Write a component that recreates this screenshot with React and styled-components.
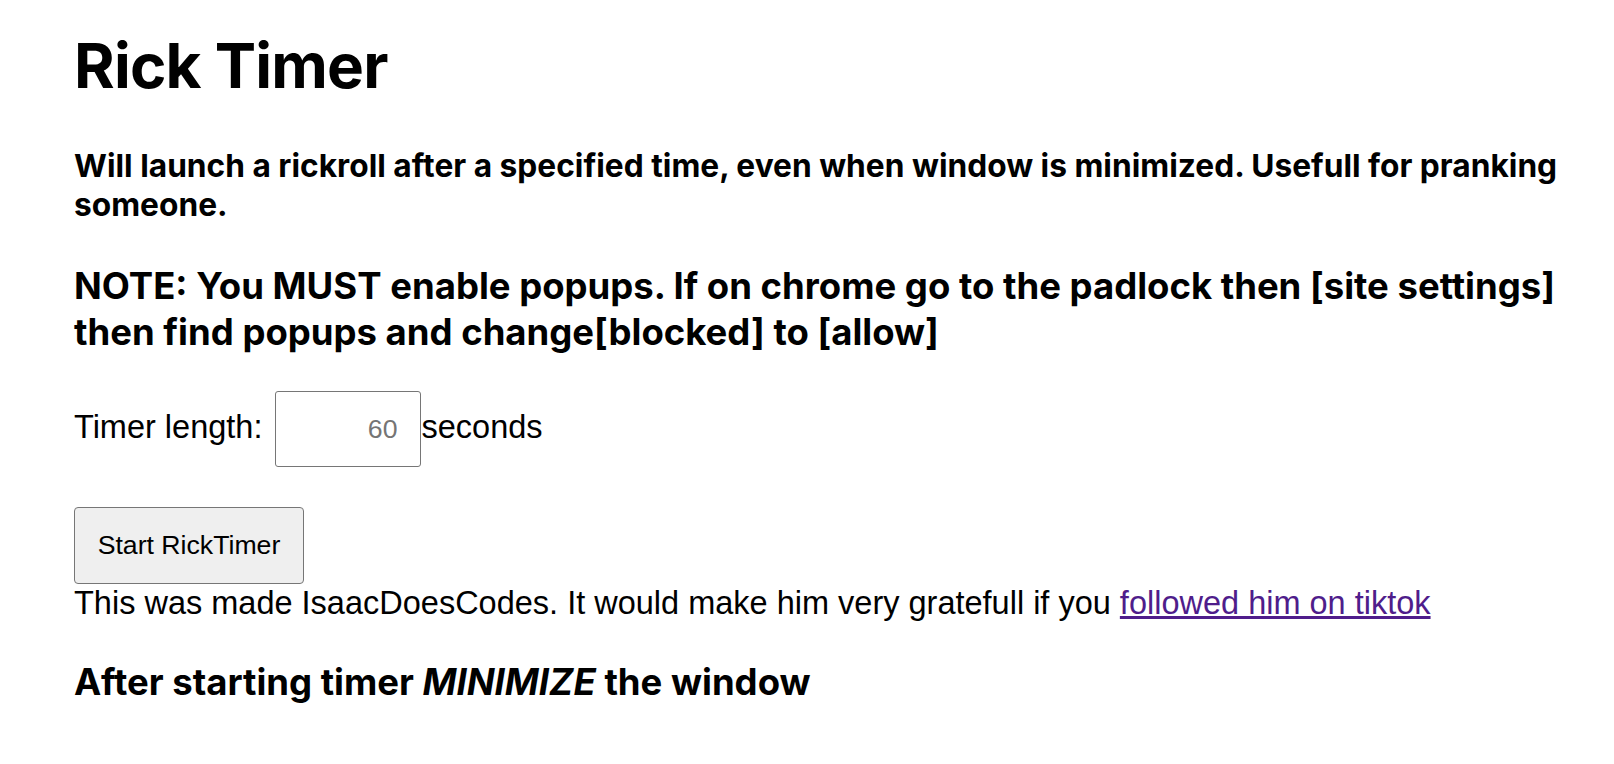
import React from "react"
import styled, { createGlobalStyle } from "styled-components"

const GlobalStyle = createGlobalStyle`
  body {
    margin: 0;
    background: #ffffff;
    color: #000000;
    font-family: Inter, "Liberation Sans", sans-serif;
  }
`

const Page = styled.div`
  padding: 27px 28px 40px 74px;
`

const Title = styled.h1`
  font-size: 62px;
  font-weight: 700;
  line-height: 77px;
  margin: 0;
  letter-spacing: -0.8px;
`

const Heading = styled.h3`
  font-size: ${(p) => p.size}px;
  font-weight: 700;
  line-height: ${(p) => p.lh}px;
  margin: ${(p) => p.top}px 0 0;
`

const TimerRow = styled.div`
  margin-top: 36px;
  font-size: 32.5px;
  font-family: "Liberation Sans", Arial, sans-serif;
  line-height: 37px;
`

const SecondsInput = styled.input`
  box-sizing: border-box;
  width: 146px;
  height: 76px;
  margin: 0 0 0 4px;
  padding: 0 23px 0 8px;
  border: 1.5px solid #767676;
  border-radius: 3px;
  font-family: "Liberation Sans", Arial, sans-serif;
  font-size: 26.67px;
  text-align: right;
  &::placeholder {
    color: #757575;
  }
  &::-webkit-inner-spin-button,
  &::-webkit-outer-spin-button {
    -webkit-appearance: none;
    margin: 0;
  }
`

const StartButton = styled.button`
  display: block;
  box-sizing: border-box;
  width: 230px;
  height: 77px;
  margin-top: 40px;
  padding: 0;
  background: #efefef;
  border: 1.5px solid #767676;
  border-radius: 4px;
  font-family: "Liberation Sans", Arial, sans-serif;
  font-size: 26.67px;
  color: #000000;
`

const Credit = styled.div`
  font-size: 32.5px;
  font-family: "Liberation Sans", Arial, sans-serif;
  line-height: 38px;
`

const TikTokLink = styled.a`
  color: #4f1d8b;
`

export default function App() {
  return (
    <>
      <GlobalStyle />
      <Page>
        <Title>Rick Timer</Title>
        <Heading size={31.7} lh={39} top={42}>
          Will launch a rickroll after a specified time, even when window is minimized. Usefull for pranking
          someone.
        </Heading>
        <Heading size={36.5} lh={46} top={39}>
          NOTE: You MUST enable popups. If on chrome go to the padlock then [site settings] then find popups
          and change[blocked] to [allow]
        </Heading>
        <TimerRow>
          Timer length: <SecondsInput type="number" placeholder="60" />
          seconds
        </TimerRow>
        <StartButton>Start RickTimer</StartButton>
        <Credit>
          This was made IsaacDoesCodes. It would make him very gratefull if you{" "}
          <TikTokLink href="#">followed him on tiktok</TikTokLink>
        </Credit>
        <Heading size={36.5} lh={46} top={37}>
          After starting timer <em>MINIMIZE</em> the window
        </Heading>
      </Page>
    </>
  )
}
